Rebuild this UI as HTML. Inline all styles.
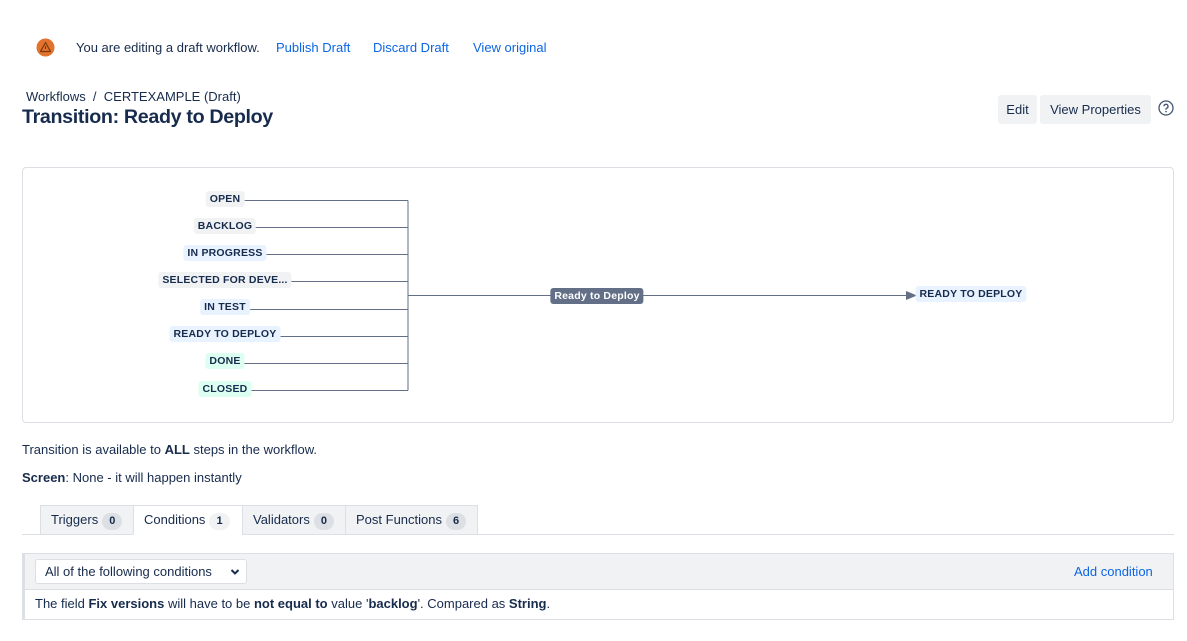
<!DOCTYPE html>
<html><head><style>
*{box-sizing:border-box;margin:0;padding:0}
body{width:1187px;height:641px;background:#fff;font-family:"Liberation Sans",sans-serif;color:#172b4d;position:relative;overflow:hidden;font-size:13px}
.a{position:absolute;white-space:nowrap}
a{color:#0c66e4;text-decoration:none}
.loz{position:absolute;font-size:10.5px;font-weight:bold;padding:2px 4px;border-radius:3px;line-height:12px;transform:translateX(-50%);color:#172b4d;letter-spacing:.2px}
.g{background:#f1f2f4}.b{background:#e9f2ff}.gr{background:#dcfff1}
.tab{position:absolute;top:505px;height:30px;border:1px solid #dcdfe4;background:#f1f2f4;font-size:13px;line-height:28px;padding-left:10px}
.cnt{display:inline-block;background:#dcdfe4;border-radius:10px;font-size:11px;font-weight:bold;padding:0 7px;line-height:17px;margin-left:4px}
.btn{position:absolute;top:95px;height:29px;background:#f1f2f4;border-radius:3px;font-size:13px;line-height:29px;text-align:center}
</style></head><body>
<svg class="a" style="left:36px;top:38px" width="19" height="19" viewBox="0 0 19 19"><circle cx="9.5" cy="9.5" r="9" fill="#e2732c"/><path d="M9.5 4.5L14.5 13.5H4.5Z" fill="none" stroke="#7a3a12" stroke-width="1.2" stroke-linejoin="round"/><path d="M9.5 8v3" stroke="#7a3a12" stroke-width="1.1"/></svg>
<div class="a" style="left:76px;top:40px">You are editing a draft workflow.</div>
<a class="a" style="left:276px;top:40px">Publish Draft</a>
<a class="a" style="left:373px;top:40px">Discard Draft</a>
<a class="a" style="left:473px;top:40px">View original</a>
<div class="a" style="left:26px;top:89px">Workflows &nbsp;/ &nbsp;CERTEXAMPLE (Draft)</div>
<div class="a" style="left:22px;top:106px;font-size:19.7px;font-weight:bold;letter-spacing:-.35px">Transition: Ready to Deploy</div>
<div class="btn" style="left:998px;width:39px">Edit</div>
<div class="btn" style="left:1040px;width:111px">View Properties</div>
<svg class="a" style="left:1158px;top:100px" width="16" height="16" viewBox="0 0 16 16"><circle cx="8" cy="8" r="7" fill="none" stroke="#44546f" stroke-width="1.3"/><path d="M6 6.3a2 2 0 1 1 2.6 1.9c-.5.2-.6.5-.6 1v.6" fill="none" stroke="#44546f" stroke-width="1.3"/><circle cx="8" cy="11.6" r=".8" fill="#44546f"/></svg>
<div class="a" style="left:22px;top:167px;width:1152px;height:256px;border:1px solid #dcdfe4;border-radius:4px"></div>
<svg class="a" style="left:0;top:0" width="1187" height="430">
<g stroke="#626f86" stroke-width="1" fill="none">
<path d="M408 200.5V390.5M226 200.5H408M226 227.5H408M266 254.5H408M226 281.5H408M246 309.5H408M276 336.5H408M244 363.5H408M250 390.5H408M408 295.5H910"/>
</g>
<path d="M906 291L917 295.5L906 300Z" fill="#626f86"/>
</svg>
<div class="loz g" style="left:225px;top:191px">OPEN</div>
<div class="loz g" style="left:225px;top:218px">BACKLOG</div>
<div class="loz b" style="left:225px;top:245px">IN PROGRESS</div>
<div class="loz g" style="left:225px;top:272px">SELECTED FOR DEVE...</div>
<div class="loz b" style="left:225px;top:299px">IN TEST</div>
<div class="loz b" style="left:225px;top:326px">READY TO DEPLOY</div>
<div class="loz gr" style="left:225px;top:353px">DONE</div>
<div class="loz gr" style="left:225px;top:381px">CLOSED</div>
<div class="loz" style="left:597px;top:288px;background:#626f86;color:#fff">Ready to Deploy</div>
<div class="loz b" style="left:971px;top:286px">READY TO DEPLOY</div>
<div class="a" style="left:22px;top:442px">Transition is available to <b>ALL</b> steps in the workflow.</div>
<div class="a" style="left:22px;top:470px"><b>Screen</b>: None - it will happen instantly</div>
<div class="a" style="left:22px;top:534px;width:1152px;height:1px;background:#dcdfe4"></div>
<div class="tab" style="left:40px;width:94px">Triggers<span class="cnt">0</span></div>
<div class="tab" style="left:133px;width:110px;background:#fff;border-bottom-color:#fff">Conditions<span class="cnt" style="background:#f1f2f4">1</span></div>
<div class="tab" style="left:242px;width:104px">Validators<span class="cnt">0</span></div>
<div class="tab" style="left:345px;width:133px">Post Functions<span class="cnt">6</span></div>
<div class="a" style="left:22px;top:553px;width:1152px;height:67px;border:1px solid #dcdfe4;border-left:3px solid #dcdfe4"></div>
<div class="a" style="left:25px;top:554px;width:1148px;height:36px;background:#f1f2f4;border-bottom:1px solid #dcdfe4"></div>
<div class="a" style="left:35px;top:559px;width:212px;height:25px;background:#fff;border:1px solid #dcdfe4;border-radius:3px;line-height:23px;padding-left:9px">All of the following conditions
<svg style="position:absolute;right:6px;top:8px" width="10" height="8" viewBox="0 0 10 8"><path d="M1.5 2L5 5.5 8.5 2" fill="none" stroke="#172b4d" stroke-width="2"/></svg></div>
<a class="a" style="left:1074px;top:564px">Add condition</a>
<div class="a" style="left:35px;top:596px">The field <b>Fix versions</b> will have to be <b>not equal to</b> value '<b>backlog</b>'. Compared as <b>String</b>.</div>
</body></html>
